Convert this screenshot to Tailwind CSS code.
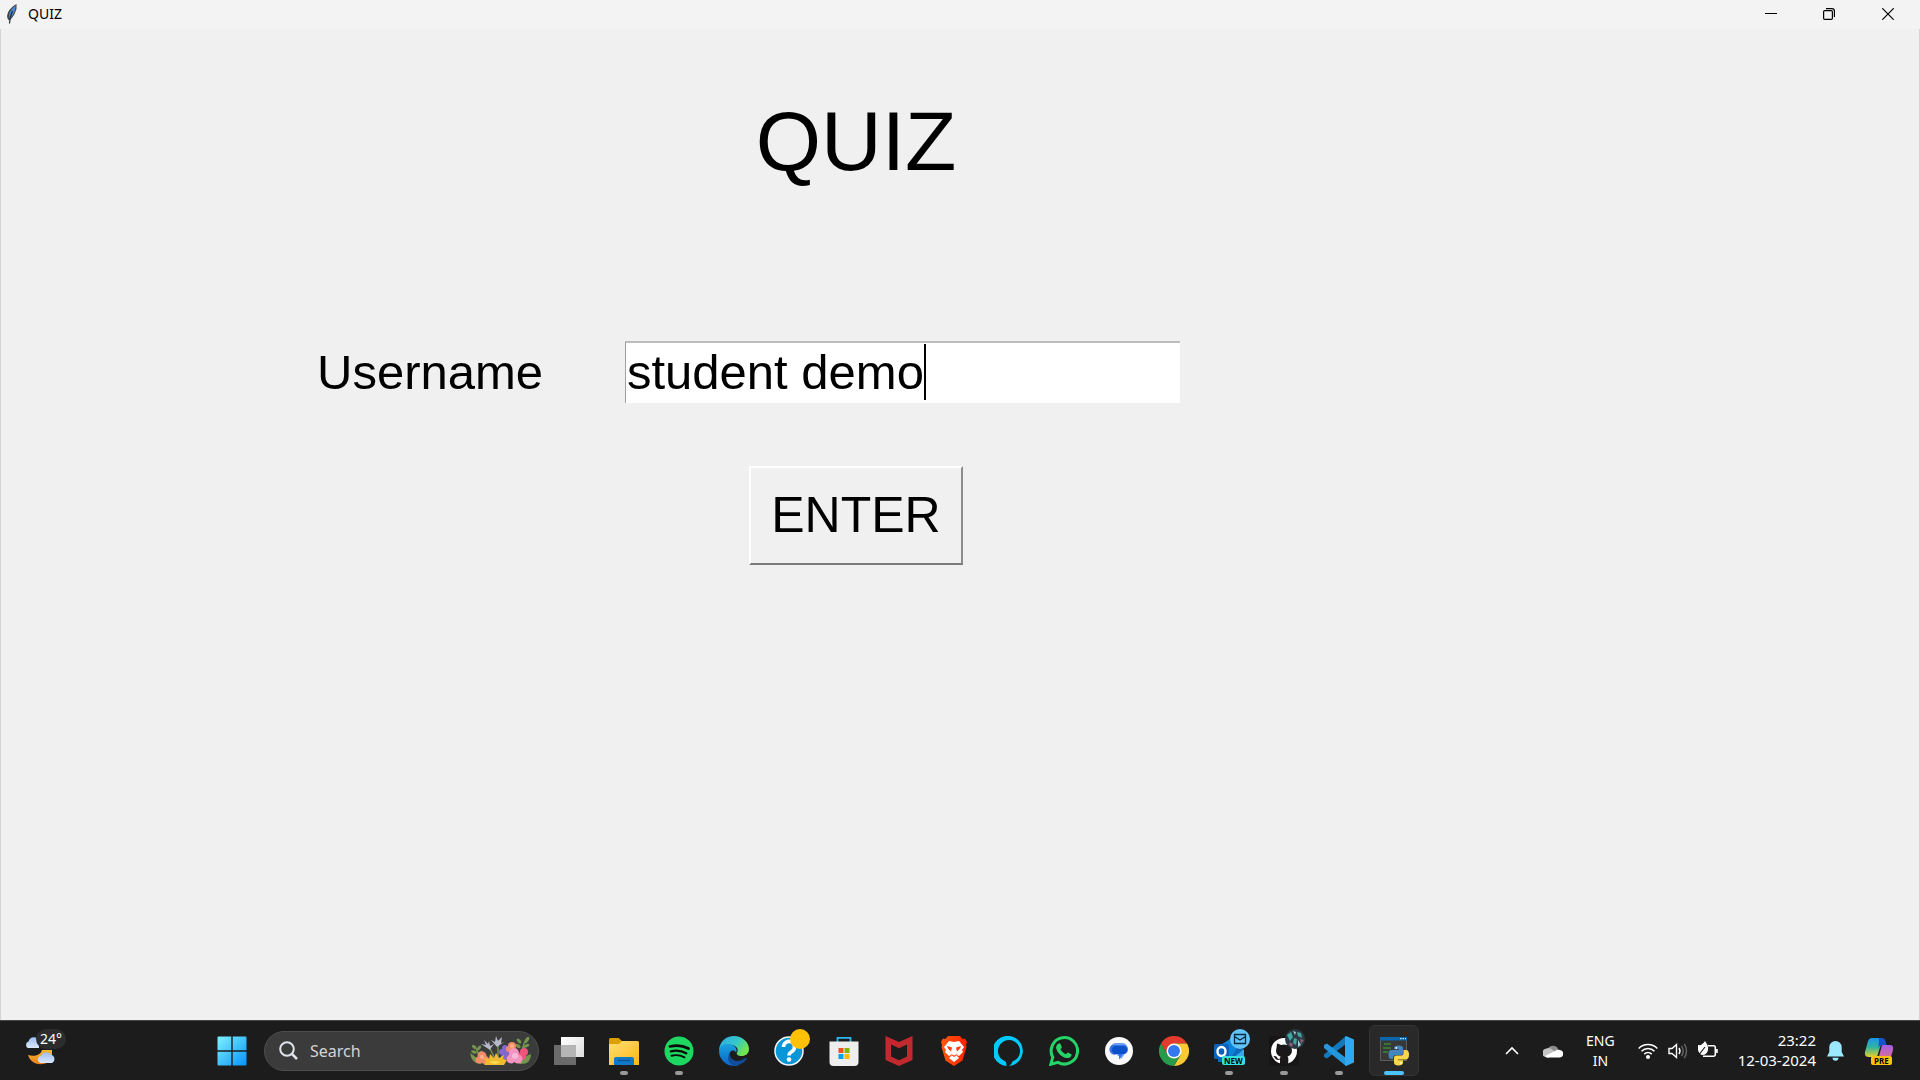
<!DOCTYPE html>
<html lang="en">
<head>
<meta charset="utf-8">
<title>QUIZ</title>
<script src="https://cdn.jsdelivr.net/npm/@tailwindcss/browser@4"></script>
</head>
<body class="flex min-h-screen flex-col bg-[#f0f0f0] font-['Noto_Sans',sans-serif] text-black">

<!-- Window title bar -->
<header class="flex h-[29px] shrink-0 items-center justify-between bg-[#f3f3f3]">
  <div class="flex h-7 items-center gap-1 self-start pl-1">
    <svg class="h-5 w-5" viewBox="0 0 20 20">
      <path d="M12.500 0C9 2 5 5 3.500 10C2.500 13 3.500 15 5 16.500C8 15 11 10 12.500 5Z" fill="#444"/>
      <path d="M11.500 1.500C8 4 6 7 5 11C5 13 5.500 14 6 14.500C8.500 12 11 8 11.500 4Z" fill="#4a86d2"/>
      <path d="M8.500 7Q6 12 5.500 19.500" stroke="#1b2b40" stroke-width="1.200" fill="none"/>
    </svg>
    <span class="text-sm">QUIZ</span>
  </div>
  <div class="flex h-7 self-start pr-0.5">
    <button aria-label="Minimize" class="flex w-[59px] items-center justify-center"><svg class="h-3 w-3" viewBox="0 0 12 12"><path d="M0 5.500h12" stroke="#000"/></svg></button>
    <button aria-label="Restore" class="flex w-[58px] items-center justify-center"><svg class="h-3 w-3" viewBox="0 0 12 12" fill="none" stroke="#000" stroke-width="1.200"><rect x=".6" y="2.600" width="8.800" height="8.800" rx="1.200"/><path d="M3 .6h5.900a2.500 2.500 0 0 1 2.500 2.500V9"/></svg></button>
    <button aria-label="Close" class="flex w-[60px] items-center justify-center"><svg class="h-3 w-3" viewBox="0 0 12 12"><path d="M.3.3l11.400 11.400M11.700.3L.3 11.700" stroke="#000" stroke-width="1.200"/></svg></button>
  </div>
</header>

<!-- Login form -->
<main class="flex-1 border-x border-[#d4d4d4] pt-16 pr-[524px] pl-[316px] font-['Liberation_Sans',Arial,sans-serif]">
  <form class="flex flex-col items-center">
    <h1 class="text-[84px] leading-[96px]">QUIZ</h1>
    <div class="mt-[152px] flex w-full items-center">
      <label for="username" class="w-[308px] shrink-0 text-[49px] leading-[60px]">Username</label>
      <div class="relative max-w-[555px] flex-1">
        <input id="username" type="text" value="student demo" class="block h-[62px] w-full border-t-2 border-l border-t-[#bdbdbd] border-l-[#a0a0a0] bg-white pl-px text-[49px] outline-none">
        <span class="absolute top-[3px] left-[299px] h-14 w-0.5 bg-black"></span>
      </div>
    </div>
    <button type="button" class="mt-[63px] h-[99px] w-[214px] border-2 border-t-white border-r-[#8c8c8c] border-b-[#7a7a7a] border-l-white bg-[#f0f0f0] text-[50px]">ENTER</button>
  </form>
</main>

<!-- Taskbar -->
<footer class="flex h-[60px] shrink-0 items-stretch border-t border-[#444] bg-[#1c1c1c] text-white">
  <button aria-label="Weather, 24 degrees" class="relative w-[204px] shrink-0 pl-[25px]">
    <svg class="h-8 w-8" viewBox="0 0 32 32">
      <defs><linearGradient id="cl" x2="0" y2="1"><stop stop-color="#9cbcf3"/><stop offset="1" stop-color="#dce8fb"/></linearGradient><linearGradient id="mo" x2="0" y2="1"><stop stop-color="#f7b733"/><stop offset="1" stop-color="#ee7f18"/></linearGradient></defs>
      <path d="M3 13a3.500 3.500 0 0 1 .5-6.500A5.500 5.500 0 0 1 14 6v7Z" fill="url(#cl)"/>
      <path d="M3 20c6 2 13 0 14-5h10v7c-3 9-20 11-24-2Z" fill="url(#mo)"/>
      <path d="M15 28a4 4 0 0 1 1-7.500a6 6 0 0 1 10.500-.5a4.200 4.200 0 0 1 0 8Z" fill="url(#cl)"/>
    </svg>
    <span class="absolute top-2 left-9 rounded-full bg-[#2c2c2c] px-1 text-sm leading-5">24°</span>
  </button>

  <nav class="flex shrink-0 items-center" aria-label="Taskbar">
    <button aria-label="Start" class="flex w-[55px] justify-center"><svg class="h-[30px] w-[30px]" viewBox="0 0 30 30"><defs><linearGradient id="win" x2="1" y2="1"><stop stop-color="#7df3ff"/><stop offset="1" stop-color="#0792fb"/></linearGradient></defs><path d="M.5 1.500a1 1 0 0 1 1-1h12.800v13.800H.5ZM15.700.5h12.800a1 1 0 0 1 1 1v12.800H15.700ZM.5 15.700h13.800v13.800H1.500a1 1 0 0 1-1-1ZM15.700 15.700h13.800v12.800a1 1 0 0 1-1 1H15.700Z" fill="url(#win)"/></svg></button>
    <label class="ml-[5px] flex h-10 w-[275px] items-center rounded-full border border-[#4d4d4d] bg-[#3b3b3b] pr-1.5 pl-3.5">
      <svg class="h-[19px] w-[19px] shrink-0" viewBox="0 0 19 19" fill="none" stroke="#e0e4ea" stroke-width="2"><circle cx="8" cy="8" r="6.800"/><path d="M13 13l5 5" stroke-width="2.500"/></svg>
      <input aria-label="Search" placeholder="Search" class="ml-3 min-w-0 flex-1 bg-transparent text-base outline-none placeholder:text-[#d4d4d4]">
      <svg class="h-[31px] w-[62px] shrink-0" viewBox="0 0 62 31">
        <g fill="none" stroke="#759b52" stroke-width="1.300"><path d="M10 22Q7 16 5 11M52 20Q52 10 57 3M24 22L18 9M28 22V5"/></g>
        <g fill="#75964d"><ellipse cx="4" cy="12" rx="2.500" ry="1.500" transform="rotate(45 4 12)"/><ellipse cx="9" cy="13" rx="3" ry="1.500" transform="rotate(-50 9 13)"/><ellipse cx="4" cy="17" rx="3" ry="1.500" transform="rotate(20 4 17)"/><ellipse cx="10" cy="18" rx="3" ry="1.500" transform="rotate(-35 10 18)"/><ellipse cx="49" cy="6" rx="3" ry="1.600" transform="rotate(50 49 6)"/><ellipse cx="57" cy="5" rx="3.500" ry="1.500" transform="rotate(-60 57 5)"/><ellipse cx="48" cy="11" rx="3" ry="1.600" transform="rotate(30 48 11)"/><ellipse cx="56" cy="11" rx="3.500" ry="1.500" transform="rotate(-25 56 11)"/><path d="M0 18q7 4 12 11Q2 30 0 18ZM61 19q-8 2-12 10 12 1 12-10Z"/></g>
        <g fill="#b4b8c8"><path d="M20 15l-9-6 5 1-2-5 4 4 1-3 1 5 4-2-3 4ZM27 12l-6-7 4 2 1-6 2 5 4-4-1 6 3-1Z"/></g>
        <g fill="#8467cf"><circle cx="35" cy="13" r="3"/><circle cx="32" cy="17" r="3"/><circle cx="37" cy="18" r="3"/><circle cx="34" cy="22" r="3"/></g>
        <g fill="#f48b68"><circle cx="12" cy="21" r="4.500"/><circle cx="9" cy="25" r="3.500"/><circle cx="15" cy="25" r="4"/><circle cx="42" cy="11" r="4"/><circle cx="39" cy="14" r="3"/></g>
        <g fill="#f9b188"><circle cx="12" cy="22" r="2"/><circle cx="42" cy="11" r="2"/></g>
        <g fill="#ef557b"><circle cx="54" cy="17" r="4"/><circle cx="52" cy="21" r="4"/></g>
        <g fill="#f594c1"><circle cx="44" cy="18" r="5"/><circle cx="41" cy="24" r="4.500"/><circle cx="48" cy="24" r="4.500"/></g><circle cx="45" cy="21" r="3" fill="#fbb9d8"/>
        <path d="M25 30H14l2-3-2-4 5 1 1-5 4 4 2-5 3 5 5-3-1 4 4 1-3 5Z" fill="#eebc2d"/><path d="M19 27l6-1 6 1-6 2Z" fill="#ffdd57"/>
      </svg>
    </label>
    <div class="ml-0.5 flex self-stretch">
      <button aria-label="Task view" class="flex w-[55px] items-center justify-center"><svg class="h-[30px] w-[30px]" viewBox="0 0 30 30"><defs><linearGradient id="tv" x2="1" y2="1"><stop stop-color="#fff"/><stop offset="1" stop-color="#ddd"/></linearGradient></defs><path d="M7 1h23v20H7Z" fill="url(#tv)"/><path d="M0 9h22v20H0Z" fill="#6b6b6b"/><path d="M7 9h15v12H7Z" fill="#b5b5b5"/></svg></button>

      <button aria-label="File Explorer" class="relative flex w-[55px] items-center justify-center"><svg class="h-[30px] w-[30px]" viewBox="0 0 30 30"><defs><linearGradient id="fo" x2="1" y2="1"><stop stop-color="#ffdf78"/><stop offset="1" stop-color="#fdb713"/></linearGradient></defs><path d="M0 3.500A1.500 1.500 0 0 1 1.500 2h8L13 5h15v5H0Z" fill="#dca000"/><path d="M0 8h10l3-3h15.500A1.500 1.500 0 0 1 30 6.500V29H0Z" fill="url(#fo)"/><path d="M5 29v-6a2 2 0 0 1 2-2h16a2 2 0 0 1 2 2v6Z" fill="#1177c7"/><path d="M9 24.500h12" stroke="#09539b" stroke-width="1.300"/></svg><i class="absolute bottom-[5px] h-1 w-2 rounded-full bg-[#999]"></i></button>

      <button aria-label="Spotify" class="relative flex w-[55px] items-center justify-center"><svg class="h-[30px] w-[30px]" viewBox="0 0 30 30"><circle cx="15" cy="15" r="14.500" fill="#1ed760"/><g fill="none" stroke="#0a0a0a" stroke-linecap="round"><path d="M6 10.500q10-2.500 18.500 2" stroke-width="2.800"/><path d="M6.800 15.300q8.500-2 15.500 2" stroke-width="2.300"/><path d="M7.500 19.700q7-1.600 13 1.600" stroke-width="1.900"/></g></svg><i class="absolute bottom-[5px] h-1 w-2 rounded-full bg-[#999]"></i></button>

      <button aria-label="Microsoft Edge" class="flex w-[55px] items-center justify-center"><svg class="h-[30px] w-[30px]" viewBox="0 0 30 30"><defs><linearGradient id="ed" x2="1" y2=".5"><stop stop-color="#2ea6e9"/><stop offset=".6" stop-color="#35c9c8"/><stop offset="1" stop-color="#72e44c"/></linearGradient><linearGradient id="ed2" x2="0" y2="1"><stop stop-color="#1ba1df"/><stop offset="1" stop-color="#0a66c4"/></linearGradient></defs><path d="M0 14C1 5 7 0 15 0s15 6 15 13c0 5-4 7-7 7-4 0-6-1.500-5-3.500 3-4-3-9-9-7.500Q3 10 0 14Z" fill="url(#ed)"/><path d="M0 15C1 9 6 7 11 8.500c5 .5 8 5 6 8-3-5-9 0-6 6 2 5 7 7 9 6.500A15 15 0 0 1 0 15Z" fill="url(#ed2)"/><path d="M11 17c-1 6 5 9 10 7.500 3-.5 5-2.500 6-2.500 1 0 1 1 0 2C21 31 10 32 9 22q0-3 2-5Z" fill="#104d9b"/></svg></button>

      <button aria-label="Get Help" class="relative flex w-[55px] items-center justify-center"><svg class="h-[30px] w-[30px]" viewBox="0 0 30 30"><circle cx="15" cy="15" r="14" fill="#0796d8" stroke="#f4f4f4" stroke-width="1.500"/><path d="M9.500 11a5.500 5.500 0 1 1 8.500 4.500c-2 1.300-3 2-3 4" fill="none" stroke="#fff" stroke-width="3.600"/><circle cx="15" cy="23.500" r="2.300" fill="#fff"/></svg><i class="absolute top-2 right-[6px] h-5 w-5 rounded-full bg-[#ffc107]"></i></button>

      <button aria-label="Microsoft Store" class="flex w-[55px] items-center justify-center"><svg class="h-[30px] w-[30px]" viewBox="0 0 30 30"><path d="M8.500 7V1.800h13V7" fill="none" stroke="#2bb8ef" stroke-width="1.800"/><path d="M.5 5.500h29V26a4 4 0 0 1-4 4h-21a4 4 0 0 1-4-4Z" fill="#eee"/><path d="M9.500 12h5v5h-5Z" fill="#f25022"/><path d="M15.500 12h5v5h-5Z" fill="#7fba00"/><path d="M9.500 18h5v5h-5Z" fill="#00a4ef"/><path d="M15.500 18h5v5h-5Z" fill="#ffb900"/></svg></button>

      <button aria-label="McAfee" class="flex w-[55px] items-center justify-center"><svg class="h-[30px] w-[30px]" viewBox="0 0 30 30"><path fill-rule="evenodd" d="M1.500 0L15 6 28.500 0v24L15 30 1.500 24ZM7 8.500v12l8 3.800 8-3.800v-12l-8 3.800Z" fill="#c1292e"/></svg></button>

      <button aria-label="Brave" class="flex w-[55px] items-center justify-center"><svg class="h-[30px] w-[30px]" viewBox="0 0 30 30"><defs><linearGradient id="br"><stop stop-color="#ff5b0f"/><stop offset="1" stop-color="#ff2000"/></linearGradient></defs><path d="M9 0h12l2.500 3 2.500-.5L28 6l-1 3 .5 2-4 13.500L15 30l-8.500-5.500L2.500 11 3 9 2 6l2-3.500 2.500.5Z" fill="url(#br)"/><path d="M10 5l5 1 5-1 5 6-2 3 1 2-4 4-4-2 4 4-5 4-5-4 4-4-4 2-4-4 1-2-2-3Z" fill="#fff"/><path d="M8 10l5 1.500-1 4-3-3ZM22 10l-5 1.500 1 4 3-3ZM11 18l4 1.500 4-1.500-4 3Z" fill="#ff3d08"/></svg></button>

      <button aria-label="Alexa" class="flex w-[55px] items-center justify-center"><svg class="h-[30px] w-[30px]" viewBox="0 0 30 30"><path d="M12.500 30A15.100 15.100 0 1 1 15 30q2.500-1.500 3.500-4.500A11 11 0 1 0 11.500 25.500q1 1 1 4.500Z" fill="#00caff"/></svg></button>

      <button aria-label="WhatsApp" class="flex w-[55px] items-center justify-center"><svg class="h-[30px] w-[30px]" viewBox="0 0 30 30"><path d="M1.800 28.300l2-7.100A13.200 13.200 0 1 1 9 26.400Z" fill="none" stroke="#25d366" stroke-width="3"/><path d="M9 8c1-1 2-1 2.500 0l1.300 3c.2.700-.8 1.600-1.300 2.200 1.300 2.600 3.200 4 5.500 5 .7-.7 1.300-2 2-1.700l3 1.500c1 .5.500 2-.5 3-2 2-5.500 1-8-.5s-5-4-6-7S7.500 9.500 9 8Z" fill="#25d366"/></svg></button>

      <button aria-label="Messages" class="flex w-[55px] items-center justify-center"><svg class="h-[30px] w-[30px]" viewBox="0 0 30 30"><circle cx="15" cy="15" r="14" fill="#fafafa"/><path d="M7 11a5 5 0 0 1 5-4h7a5 5 0 0 1 4 7l-3 5-3 4-2-3h-1Z" fill="#6d9ef6"/><path d="M8 9h11a4.500 4.500 0 0 1 1 9h-1l-4 5.500V18h-2a5 5 0 0 1-5-9Z" fill="#3871e8"/><rect x="8" y="10" width="15" height="8" rx="4" fill="#0b51c9"/></svg></button>

      <button aria-label="Google Chrome" class="flex w-[55px] items-center justify-center"><svg class="h-[30px] w-[30px]" viewBox="0 0 30 30"><path d="M2 7.500A15 15 0 0 1 28 7.500H15L8.500 18.700Z" fill="#e33b2e"/><path d="M28 7.500A15 15 0 0 1 15 30l6.500-11.200L15 7.500Z" fill="#fcc934"/><path d="M2 7.500A15 15 0 0 0 15 30l6.500-11.200h-13Z" fill="#269b4b"/><circle cx="15" cy="15" r="7.500" fill="#fff"/><circle cx="15" cy="15" r="6" fill="#3478ee"/></svg></button>

      <button aria-label="Outlook" class="relative flex w-[55px] items-center justify-center"><svg class="h-[30px] w-[30px]" viewBox="0 0 30 30"><path d="M4 12L17 2l12 9v15H4Z" fill="#1067b5"/><path d="M8 8l9-5 7 7-7 12Z" fill="#0b83d9"/><path d="M30 13L12 28h16a2 2 0 0 0 2-2Z" fill="#32a9ec"/><rect y="8" width="15" height="15" rx="1.500" fill="#0c62b8"/><ellipse cx="7.500" cy="15.500" rx="4" ry="4.500" fill="none" stroke="#fff" stroke-width="2.400"/></svg>
        <svg class="absolute top-2 right-[6px] h-5 w-5" viewBox="0 0 20 20"><circle cx="10" cy="10" r="10" fill="#60c4fa"/><path d="M4.500 5.500h11v9h-11Zm0 2l5.500 3.500 5.500-3.500" fill="none" stroke="#06283c" stroke-width="1.300"/></svg>
        <span class="absolute top-[35px] left-[21px] rounded-xs bg-[#32e2dc] px-[2px] text-[8px] leading-[9px] font-bold text-black">NEW</span><i class="absolute bottom-[5px] h-1 w-2 rounded-full bg-[#999]"></i></button>

      <button aria-label="GitHub" class="relative flex w-[55px] items-center justify-center"><svg class="h-[30px] w-[30px]" viewBox="0 0 30 30"><path d="M0 0h30v30H0Z" fill="#171515"/><circle cx="15" cy="15" r="13" fill="#fff"/><path d="M11 28v-4.500q-4 1.500-5.500-2l-1-1.200q3-.8 4 2 1 1 2.500.3l.5-2C7 19 6.500 15.500 7.500 12L8 7.500q2 0 4 1.500 3-.8 6 0 2-1.500 4-1.500l.5 4.500c1 3.500.5 7-4 8.600q1.500 1.500.5 7.400Z" fill="#1a1818"/></svg>
        <svg class="absolute top-2 right-[6px] h-5 w-5" viewBox="0 0 20 20"><circle cx="10" cy="10" r="10" fill="#2c3944"/><g fill="#3fa8a0"><path d="M2 6l4-3 2 5-3 4Z"/><path d="M12 3l4 1 1 5-4-2Z"/><path d="M9 9l3 1-1 6-3-2Z"/></g><g fill="#8b5c73"><path d="M5 13l3 2-1 3-3-2ZM15 10l4 1-3 4Z"/></g><path d="M8 2l3 1-1 3Zm5 9l3 5-3 2Z" fill="#9ed2d3"/></svg><i class="absolute bottom-[5px] h-1 w-2 rounded-full bg-[#999]"></i></button>

      <button aria-label="Visual Studio Code" class="relative flex w-[55px] items-center justify-center"><svg class="h-[30px] w-[30px]" viewBox="0 0 30 30"><path d="M22 8L3 22.500 0 21v-2.500L22 0Z" fill="#1279bd"/><path d="M0 9l3-1.500L22 22v8L0 12Z" fill="#2496dc"/><path d="M22 0l8 3.500v23L22 30l-1-1V1Z" fill="#30a8f0"/></svg><i class="absolute bottom-[5px] h-1 w-2 rounded-full bg-[#999]"></i></button>

      <button aria-label="Python" class="relative my-1 ml-[3px] flex w-[50px] items-center justify-center rounded-md border border-[#343434] bg-[#292929]"><svg class="h-[30px] w-[30px]" viewBox="0 0 30 30"><path d="M1.500 1.500h26v23h-26Z" fill="#383838" stroke="#5d5d5d"/><path d="M1 1h27v3.500H1Z" fill="#0867ad"/><path d="M21 2.700h1.500M23.500 2.700H25M26 2.700h1" stroke="#fff"/><path d="M5 8h7M4 12h8M4 16h5" stroke="#378c34" stroke-width="1.300"/><path d="M15 14v-2q0-2.500 4.500-2.500T24 12v5q0 2-2 2h-5q-3 0-3 4h-2q-2.500 0-2.500-4.500T12 14h8v-.8h-5Z" fill="#4385bd"/><path d="M24.500 14H27q3 0 3 4.500t-3 5h-8v.7h5v2.300q0 3-4.500 3T15 26.500V22q0-2.500 2.500-2.500h4.500q2.500 0 2.500-2.500Z" fill="#fbd64a"/><circle cx="17.300" cy="11.900" r=".9" fill="#fff"/><circle cx="22" cy="27" r=".9" fill="#fff"/></svg><i class="absolute bottom-0 h-1 w-5 rounded-full bg-[#4cc2ff]"></i></button>
    </div>
  </nav>

  <!-- System tray -->
  <div class="ml-auto flex shrink-0 items-center pr-[26px]">
    <button aria-label="Show hidden icons" class="mr-6"><svg class="h-[14px] w-[14px]" viewBox="0 0 14 14"><path d="M1 10l6-6 6 6" fill="none" stroke="#fff" stroke-width="1.600"/></svg></button>
    <button aria-label="OneDrive" class="mr-[23px]"><svg class="h-5 w-5" viewBox="0 0 20 20"><path d="M5 8a5.500 5.500 0 0 1 10 0l-3 3Z" fill="#8d8d8d"/><path d="M4 16.500a4.500 4.500 0 0 1-.5-9Q7 6 11 10l3 2-8 4.500Z" fill="#c4c4c4"/><path d="M2 15l10-5q2-2.500 5-1a3.800 3.800 0 0 1 0 7.500H4Z" fill="#fff"/></svg></button>
    <button class="mr-[23px] flex flex-col items-center text-sm leading-5"><span>ENG</span><span>IN</span></button>
    <button aria-label="Network, volume and battery" class="mr-5 flex items-center gap-2.5">
      <svg class="h-5 w-5" viewBox="0 0 20 20" fill="none" stroke="#fff" stroke-width="1.500"><path d="M.7 7.500a13 13 0 0 1 18.600 0M3.500 10.300a9 9 0 0 1 13 0M6.300 13.100a5.200 5.200 0 0 1 7.400 0"/><circle cx="10" cy="16" r="1.300" fill="#fff"/></svg>
      <svg class="h-5 w-5" viewBox="0 0 20 20" fill="none" stroke="#fff" stroke-width="1.400"><path d="M1 7.500h3l4.500-4v13l-4.500-4H1Z"/><path d="M11 7q2 3 0 6"/><path d="M13.500 4.800q3.500 5.200 0 10.400M16.300 2.800q4.500 7.200 0 14.400" stroke="#666"/></svg>
      <svg class="h-5 w-5" viewBox="0 0 20 20"><path d="M10 4.700h5.500a1.800 1.800 0 0 1 1.800 1.800v7a1.800 1.800 0 0 1-1.800 1.800H5M19 8v4" fill="none" stroke="#fff" stroke-width="1.600"/><path d="M0 4q4 1 7-4 4 5 3 9-1 5-6 5-5-2-4-10Z" fill="#fff"/><path d="M0 15l7-9" stroke="#1c1c1c" stroke-width="1.200"/></svg>
    </button>
    <button class="mr-[11px] flex flex-col items-end pb-0.5 text-[15px] leading-5"><span>23:22</span><span>12-03-2024</span></button>
    <button aria-label="Notifications" class="mr-5"><svg class="h-[20px] w-[17px]" viewBox="0 0 17 20"><path d="M8.500 0a6.200 6.200 0 0 1 6.200 6.200v4.800L17 15.500H0L2.300 11V6.200A6.200 6.200 0 0 1 8.500 0ZM5.500 16.800h6a3 3 0 0 1-6 0Z" fill="#9be8ff"/></svg></button>
    <button aria-label="Copilot" class="relative"><svg class="h-[30px] w-[30px]" viewBox="0 0 30 30"><defs><linearGradient id="c1" x2="0" y2="1"><stop stop-color="#1697ee"/><stop offset=".5" stop-color="#35b59b"/><stop offset="1" stop-color="#e7cf27"/></linearGradient><linearGradient id="c2" x2="0" y2="1"><stop stop-color="#a55ce9"/><stop offset="1" stop-color="#f57a65"/></linearGradient></defs><path d="M8 2h11l-6 19H5q-5 0-4-5L4 5q1-3 4-3Z" fill="url(#c1)"/><path d="M15 2h3q3 0 3.500 3l1 4h-5q-2 0-3 3Z" fill="#1454c8"/><path d="M18 9h8q4 0 3 5l-3 10q-1 4-4 4H11l3-4Z" fill="url(#c2)"/></svg><span class="absolute top-5 left-[7px] rounded-xs bg-[#ffc20e] px-[3px] text-[8px] leading-[9px] font-bold text-black">PRE</span></button>
  </div>
</footer>
</body>
</html>
